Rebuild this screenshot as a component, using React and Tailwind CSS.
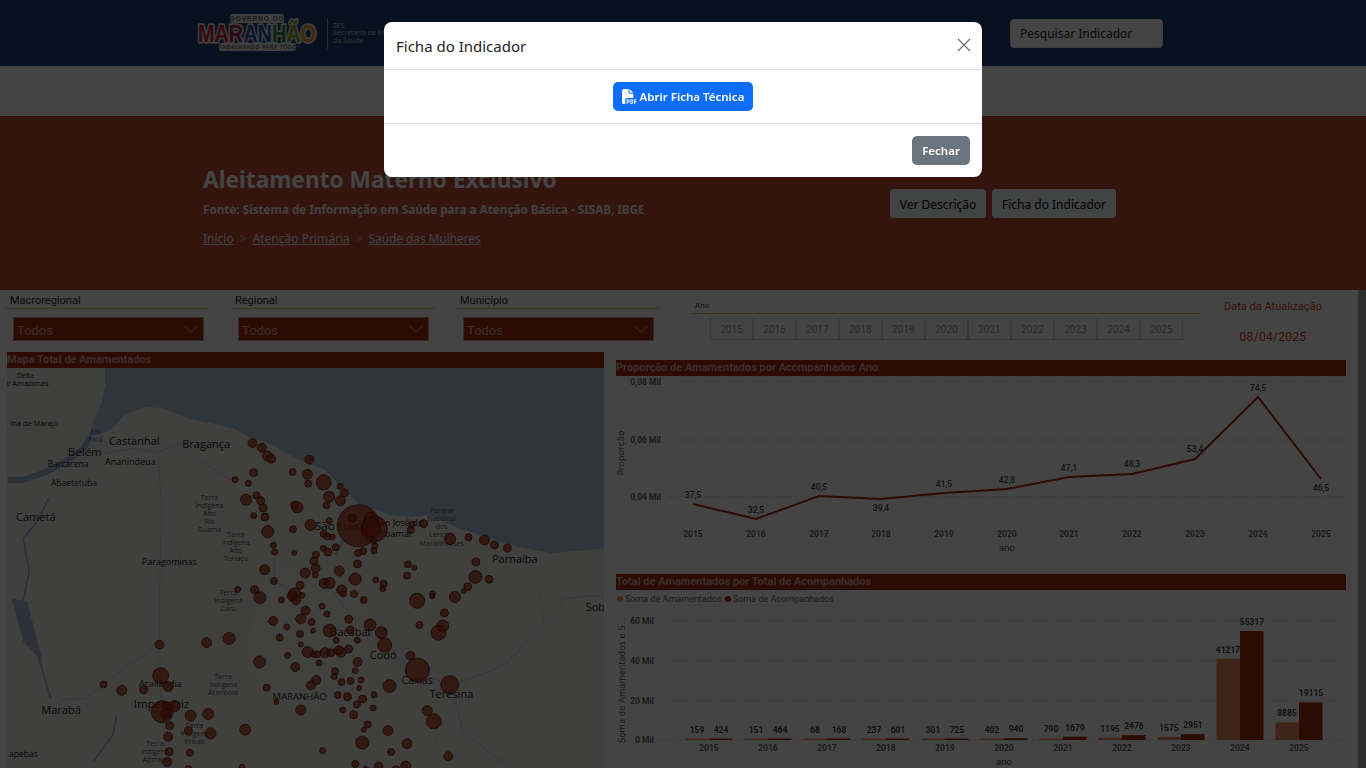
import { ChevronDown } from 'lucide-react'
import { FaFilePdf } from 'react-icons/fa6'

const years = [2015, 2016, 2017, 2018, 2019, 2020, 2021, 2022, 2023, 2024, 2025]

// map data is noted on a 2.57 x 3 grid, px() and py() bring it to map pixels
const px = (x) => x / 2.57 - 7
const py = (y) => y / 3 - 3

const bubbles = [
  [649,234,4.5],[673,248,4.5],[687,273,5],[697,281,4.5],[795,284,4.5],[652,323,4],[604,344,3],[638,355,3],[752,321,3.5],[790,328,5],
  [792,356,3.5],[832,352,7.5],[874,364,3],[885,383,4],[846,395,5.5],[875,407,5],[839,421,3.5],[659,391,3.5],[632,404,5.5],[670,407,4],
  [676,429,4],[652,452,3],[681,456,4],[757,421,4],[764,427,5.5],[688,500,6],[753,493,3.5],[798,480,5.5],[846,467,3],[962,492,13],
  [921,482,21],[905,459,4],[954,462,7],[953,487,9.5],[1059,478,3],[1056,495,3.5],[1089,476,4],[1157,522,5.5],[1204,517,3.5],[1245,525,5],
  [1271,540,4],[1304,549,4],[1223,591,4],[1222,636,6.5],[1257,643,4],[1202,665,4],[1192,678,2.5],[1169,696,5.5],[1112,686,3],[1111,694,2.5],
  [1072,707,7.5],[1142,744,4],[1138,783,6],[1127,803,7.5],[1078,780,3.5],[1048,598,3.5],[1065,608,2.5],[1046,632,3.5],[966,645,3],[986,656,3.5],
  [984,671,3],[913,642,6],[878,675,5],[882,687,3],[910,687,3.5],[935,705,3.5],[832,507,3.5],[841,514,3.5],[854,516,3],[960,527,3],
  [963,543,3],[961,557,3],[933,558,3.5],[920,564,3.5],[919,597,4],[872,618,5],[863,547,3.5],[831,550,3],[843,561,4],[812,569,3.5],
  [807,588,4],[811,610,4.5],[810,630,3],[784,624,5],[833,655,5],[847,654,5.5],[771,661,4],[776,691,3],[757,686,6],[751,693,5],
  [761,706,4.5],[723,705,3],[703,541,3],[706,561,3],[756,564,2.5],[680,614,5],[704,648,3.5],[611,673,3],[654,674,4],[668,698,6],
  [828,724,3],[840,747,3],[785,737,4.5],[773,762,5],[801,771,3.5],[702,768,4.5],[737,786,3],[805,797,2.5],[771,807,3.5],[719,818,3.5],
  [847,797,6.5],[900,795,4],[896,763,4],[951,780,6],[980,803,6],[918,826,3],[864,826,3],[989,840,7],[773,838,2.5],[791,861,5.5],
  [805,868,3],[815,868,3.5],[835,863,5],[850,863,4],[871,856,4.5],[876,862,5],[896,852,4],[739,871,3],[1055,872,4.5],[1073,915,12],
  [919,891,4.5],[820,894,3],[759,906,4.5],[667,891,6],[861,919,3.5],[913,917,3],[859,935,3],[813,945,4.5],[799,961,4.5],[878,951,3.5],
  [901,948,3.5],[928,945,3],[923,969,2.5],[1001,963,6.5],[1156,959,9],[685,968,3.5],[868,990,3.5],[893,995,4],[961,989,3],[932,1002,4],
  [917,1018,3.5],[959,1029,3],[881,1035,3],[909,1049,4],[773,1035,5],[710,1011,2.5],[1098,1037,5],[1115,1069,7.5],[945,1078,3.5],[935,1094,2.5],
  [997,1097,5],[931,1133,6.5],[1046,1136,5],[1005,1161,3.5],[829,1157,3],[1152,1174,4.5],[913,1197,3.5],[973,1205,4.5],[1043,1203,5],[1018,1215,4],
  [940,1213,3],[410,839,4.5],[531,833,5],[589,820,6],[413,932,8],[432,965,5],[266,958,3.5],[313,976,5],[369,974,4],[417,1040,11],
  [430,1025,4.5],[426,1047,5],[449,1023,5.5],[490,1052,5.5],[535,1047,5.5],[436,1082,4],[432,1115,4.5],[484,1097,4],[541,1105,5.5],[630,1094,5.5],
  [435,1160,4],[488,1163,3.5],[430,1191,4.5],[622,1207,3],[484,1212,3.5],
]

const places = [
  ['Delta',65,32,7],['o Amazonas',70,56,7.5],['lha de Marajó',88,175,7.5],['Castanhal',345,228,11],['Belém',218,260,11.5],['Bragança',530,237,11],
  ['Barcarena',175,296,8.5],['Ananindeua',335,291,9],['Abaetetuba',190,354,8.5],['Cametá',92,457,11],['Paragominas',435,592,9],['São Luís',866,484,11.5],
  ['São José de',1025,475,9],['Ribamar',1015,506,9],['Parnaíba',1323,583,11],['Sob',1530,727,11],['Bacabal',900,802,11],['Codó',985,869,11],
  ['Caxias',1072,946,10.5],['Açailândia',412,958,9],['MARANHÃO',770,995,9.5],['Teresina',1160,987,11],['Imperatriz',415,1016,11.5],['Marabá',157,1036,11],
  ['apebas',60,1167,8.5],
]

const areas = [
  [538, 397, ['Terra', 'Indígena', 'Alto', 'Rio', 'Guamá']],
  [606, 509, ['Terra', 'Indígena', 'Alto', 'Turiaçu']],
  [587, 682, ['Terra', 'Indígena', 'Caru']],
  [573, 935, ['Terra', 'Indígena', 'Araribóia']],
  [500, 1082, ['Terra', 'Indígena', 'Krikati']],
  [398, 1135, ['Terra', 'Indígena', 'Apinajé']],
  [1135, 437, ['Parque', 'Nacional', 'dos', 'Lençóis', 'Maranhenses']],
]

const sea = [[270,0],[270,60],[262,110],[240,170],[228,215],[262,205],[290,190],[320,150],[370,125],[420,130],[480,160],[540,175],[600,190],[640,215],[700,240],[760,280],[800,300],[830,310],[880,370],[920,415],[1000,450],[1060,455],[1100,450],[1180,490],[1260,520],[1330,545],[1420,565],[1553,550],[1553,0]]
const rivers = [
  [[230,215],[215,250],[170,290],[120,320],[60,345],[20,345]],
  [[125,400],[95,470],[60,520],[75,620],[50,760],[100,880],[130,1000]],
  [[860,570],[880,530],[905,510]],
  [[300,1050],[290,1110],[240,1190]],
]
const roads = [
  [[270,265],[345,250],[400,262],[470,235],[520,290],[600,350]],
  [[405,262],[415,420],[410,700],[410,840],[415,1000],[430,1200]],
  [[410,840],[330,900],[220,1000],[155,1005]],
  [[705,560],[705,650],[770,690],[850,670],[900,750],[1000,860],[1075,925],[1160,960],[1300,900],[1450,700],[1553,690]],
  [[1160,960],[1190,1100],[1300,1200]],
]
const borders = [[[1380,640],[1400,800],[1290,900],[1200,950],[1130,1100],[1100,1209]]]

const toPath = (pts) => pts.map(([x, y], i) => `${i ? 'L' : 'M'}${px(x).toFixed(1)} ${py(y).toFixed(1)}`).join(' ')

const proportion = [
  [37.5, 693, 504, 495], [32.5, 756, 519, 510], [40.5, 819, 496, 487], [39.4, 881, 499, 508], [41.5, 944, 493, 484], [42.8, 1007, 489, 480],
  [47.1, 1069, 477, 468], [48.3, 1132, 474, 464], [53.4, 1195, 459, 449], [74.5, 1258, 397, 388], [46.5, 1321, 479, 488],
]

const totals = [
  [2015, 159, 424], [2016, 151, 464], [2017, 68, 168], [2018, 237, 601], [2019, 301, 725], [2020, 402, 940],
  [2021, 790, 1679], [2022, 1195, 2476], [2023, 1575, 2951], [2024, 41217, 55317], [2025, 8885, 19115],
]

function Logo() {
  const letters = [['M', '#c9202f'], ['A', '#c9202f'], ['R', '#a8204f'], ['A', '#1f56a8'], ['N', '#1f56a8'], ['H', '#1c8a4a'], ['Ã', '#7fa01f'], ['O', '#e8961c']]
  return (
    <svg width="125" height="38" viewBox="0 0 125 38" className="shrink-0 -ml-px">
      <rect x="34" y="0" width="54" height="9" rx="3" fill="#e8e8e8" />
      <text x="61" y="7" textAnchor="middle" fontSize="6.5" fontFamily="Liberation Sans" letterSpacing="1" fontWeight="700" fill="#666">GOVERNO DO</text>
      <rect x="23" y="29" width="77" height="8" rx="2" fill="#e8e8e8" />
      <text x="61.5" y="35.3" textAnchor="middle" fontSize="5" fontFamily="Liberation Sans" letterSpacing="0.6" fontWeight="700" fill="#666">TRABALHANDO PARA TODOS</text>
      <text x="2" y="28" fontSize="23" fontFamily="Liberation Sans" fontWeight="700" textLength="118" lengthAdjust="spacingAndGlyphs" stroke="#e8e8e8" strokeWidth="3.5" strokeLinejoin="round" paintOrder="stroke">
        {letters.map(([l, c], i) => <tspan key={i} fill={c}>{l}</tspan>)}
      </text>
    </svg>
  )
}

function Filter({ label }) {
  return (
    <div className="w-[203px]">
      <div className="h-[19px] pl-1 text-[11px] leading-[22px] text-[#2a2a2a] border-b border-[#e0c070]">{label}</div>
      <div className="mt-2 ml-[7px] w-[191px] h-[24px] flex items-center justify-between pl-[3px] pr-[3px] bg-[#a5290b] border border-[#c9a090] text-[13px] text-white">
        <span className="pt-[3px] opacity-60">Todos</span>
        <ChevronDown className="w-[26px] h-[26px] shrink-0 -mr-1 text-white opacity-70" strokeWidth={0.8} />
      </div>
    </div>
  )
}

function SectionTitle({ children }) {
  return <div className="h-[16px] bg-[#a5290b] text-[11px] leading-[15px] font-bold text-white/60 whitespace-nowrap">{children}</div>
}

function MapChart() {
  return (
    <svg width="597" height="400" viewBox="0 0 597 400" className="block">
      <rect width="597" height="400" fill="#f0efe9" />
      <ellipse cx="300" cy="270" rx="60" ry="70" fill="#f3f3ef" />
      <ellipse cx="220" cy="225" rx="30" ry="55" fill="#ecefe4" />
      <ellipse cx="520" cy="260" rx="40" ry="60" fill="#ecefe4" />
      <ellipse cx="50" cy="60" rx="50" ry="40" fill="#ecefe4" />
      <path d={toPath(sea) + ' Z'} fill="#b3c4dc" />
      {rivers.map((r, i) => <path key={i} d={toPath(r)} fill="none" stroke="#a9bcd8" strokeWidth={i === 0 ? 6 : 2} />)}
      <path d={toPath([[30,700],[70,710],[90,800],[110,890],[60,830]]) + ' Z'} fill="#a9bcd8" />
      {roads.map((r, i) => <path key={i} d={toPath(r)} fill="none" stroke="#d6cede" strokeWidth="1" />)}
      {borders.map((r, i) => <path key={i} d={toPath(r)} fill="none" stroke="#ccc" strokeWidth="0.8" strokeDasharray="3 2" />)}
      {places.map(([t, x, y, s]) => (
        <text key={t} x={px(x)} y={py(y) + s * 0.35} textAnchor="middle" fontSize={s} fontFamily="Open Sans" fill="#222">{t}</text>
      ))}
      {areas.map(([x, y, lines]) => lines.map((t, i) => (
        <text key={t + y} x={px(x)} y={py(y) + i * 8.1 + 2.5} textAnchor="middle" fontSize="7" fontFamily="Open Sans" fill="#555">{t}</text>
      )))}
      <text x={px(245)} y={py(198) + 2.5} textAnchor="middle" fontSize="7" fontFamily="Open Sans" fill="#3a6db0">Rio</text>
      <text x={px(245)} y={py(223) + 2.5} textAnchor="middle" fontSize="7" fontFamily="Open Sans" fill="#3a6db0">Pará</text>
      {bubbles.map(([x, y, r], i) => (
        <circle key={i} cx={px(x)} cy={py(y)} r={r} fill="#a5290b" fillOpacity="0.72" stroke="#6a1503" strokeWidth="0.8" />
      ))}
    </svg>
  )
}

function LineChart() {
  const points = proportion.map(([, x, y]) => `${x - 616},${y - 376}`).join(' ')
  return (
    <svg width="730" height="190" viewBox="0 0 730 190" className="block" fontFamily="Roboto">
      {[['0,08 Mil', 6], ['0,06 Mil', 64], ['0,04 Mil', 121]].map(([t, y]) => (
        <g key={t}>
          <line x1="52" x2="730" y1={y} y2={y} stroke="#bbb" strokeWidth="1" strokeDasharray="1 2" />
          <text x="45" y={y + 3} textAnchor="end" fontSize="8.5" fontWeight="700" fill="#666">{t}</text>
        </g>
      ))}
      <text transform="translate(8 77) rotate(-90)" textAnchor="middle" fontSize="9" fontFamily="DejaVu Sans" fill="#666">Proporção</text>
      <polyline points={points} fill="none" stroke="#a5290b" strokeWidth="2" />
      {proportion.map(([v, x, , ly], i) => (
        <g key={v}>
          <text x={x - 616} y={ly - 373} textAnchor="middle" fontSize="8.5" fontWeight="500" fill="#444">{v.toFixed(1).replace('.', ',')}</text>
          <text x={x - 616} y="161" textAnchor="middle" fontSize="8.5" fontWeight="700" fill="#666">{years[i]}</text>
        </g>
      ))}
      <text x="391" y="175" textAnchor="middle" fontSize="9.5" fill="#444">ano</text>
    </svg>
  )
}

function BarChart() {
  const base = 150
  const scale = 109 / 55317
  return (
    <svg width="730" height="178" viewBox="0 0 730 178" className="block" fontFamily="Roboto">
      <circle cx="4" cy="9" r="3" fill="#e98a63" />
      <text x="9" y="12" fontSize="9" fill="#666">Soma de Amamentados</text>
      <circle cx="112" cy="9" r="3" fill="#a5290b" />
      <text x="117" y="12" fontSize="9" fill="#666">Soma de Acompanhados</text>
      {[['60 Mil', 31], ['40 Mil', 71], ['20 Mil', 111], ['0 Mil', 150]].map(([t, y]) => (
        <g key={t}>
          <line x1="44" x2="730" y1={y} y2={y} stroke="#bbb" strokeWidth="1" strokeDasharray="1 2" />
          <text x="38" y={y + 3} textAnchor="end" fontSize="8.5" fontWeight="700" fill="#666">{t}</text>
        </g>
      ))}
      <text transform="translate(9 90) rotate(-90)" textAnchor="middle" fontSize="8.5" fontFamily="DejaVu Sans" fill="#666">Soma de Amamentados e S...</text>
      {totals.map(([year, a, b], i) => {
        const cx = 93 + i * 59
        const ha = Math.max(a * scale, 1.5)
        const hb = Math.max(b * scale, 1.5)
        return (
          <g key={year}>
            <rect x={cx - 23.5} y={base - ha} width="23.5" height={ha} fill="#e98a63" />
            <rect x={cx} y={base - hb} width="23.5" height={hb} fill="#a5290b" />
            <text x={cx - 12} y={base - ha - 6} textAnchor="middle" fontSize="8.5" fontWeight="700" fill="#444">{a}</text>
            <text x={cx + 12} y={base - hb - 6} textAnchor="middle" fontSize="8.5" fontWeight="700" fill="#444">{b}</text>
            <text x={cx} y="161" textAnchor="middle" fontSize="8.5" fontWeight="700" fill="#666">{year}</text>
          </g>
        )
      })}
      <text x="388" y="175" textAnchor="middle" fontSize="9.5" fill="#444">ano</text>
    </svg>
  )
}

function Dashboard() {
  return (
    <div className="relative h-[478px] overflow-hidden bg-white font-['Roboto',sans-serif]">
      <div className="absolute right-0 top-0 bottom-0 w-2 bg-[#aaa]" />
      <div className="h-[62px] flex items-start">
        <div className="ml-[6px] flex gap-[22px]">
          <Filter label="Macroregional" />
          <Filter label="Regional" />
          <Filter label="Município" />
        </div>
        <div className="ml-[33px] w-[508px]">
          <div className="h-[24px] pt-[11px] pl-[3px] text-[8px] leading-[10px] text-[#333] border-b border-[#e0c070]">Ano</div>
          <div className="mt-[4px] ml-[18px] flex">
            {years.map((y) => (
              <div key={y} className="w-[43px] h-[22px] pt-px flex items-center justify-center border border-[#d8d8d8] text-[10px] text-[#999]">{y}</div>
            ))}
          </div>
        </div>
        <div className="w-[146px] text-center text-[#c8402a]">
          <div className="mt-[10px] text-[11px] leading-[14px]">Data da Atualização</div>
          <div className="mt-[16px] text-[12px] leading-[14px] tracking-[0.3px]">08/04/2025</div>
        </div>
      </div>
      <div className="flex items-start">
        <div className="ml-[7px] w-[597px]">
          <SectionTitle>Mapa Total de Amamentados</SectionTitle>
          <MapChart />
        </div>
        <div className="ml-[12px] w-[730px] pt-[8px]">
          <SectionTitle>Proporção de Amamentados por Acompanhados Ano</SectionTitle>
          <div className="h-[198px]">
            <LineChart />
          </div>
          <SectionTitle>Total de Amamentados por Total de Acompanhados</SectionTitle>
          <BarChart />
        </div>
      </div>
    </div>
  )
}

export default function App() {
  return (
    <div className="relative h-screen overflow-hidden bg-white font-['Noto_Sans',sans-serif]">
      <header className="h-[66px] bg-[#1a3c74] flex items-center pl-[197px] pr-[203px]">
        <Logo />
        <div className="ml-[6px] h-[31px] border-l border-white/50" />
        <div className="ml-[5px] w-[60px] text-[7px] leading-[7.5px] text-white/70 whitespace-nowrap">
          <p>SES</p>
          <p>Secretaria de Estado</p>
          <p>da Saúde</p>
        </div>
        <input
          readOnly
          placeholder="Pesquisar Indicador"
          className="ml-auto w-[153px] h-[29px] px-[9px] pt-px rounded bg-white border border-gray-200 text-[12px] placeholder:text-[#222]"
        />
      </header>
      <nav className="h-[50px] bg-white" />
      <section className="h-[174px] bg-[#bf4f34] flex items-start pl-[203px]">
        <div className="w-[687px]">
          <h1 className="mt-[50px] text-[22.7px] leading-[28px] font-bold text-white">Aleitamento Materno Exclusivo</h1>
          <p className="mt-[7px] text-[11.7px] leading-[16px] font-bold text-white/90">Fonte: Sistema de Informação em Saúde para a Atenção Básica - SISAB, IBGE</p>
          <div className="mt-[14px] flex gap-[6px] text-[12px] leading-[15px] text-white/90">
            <a className="underline">Início</a>
            <span className="opacity-50">&gt;</span>
            <a className="underline">Atenção Primária</a>
            <span className="opacity-50">&gt;</span>
            <a className="underline tracking-[-0.1px]">Saúde das Mulheres</a>
          </div>
        </div>
        <div className="mt-[73px] flex gap-[6px]">
          <button className="w-[96px] h-[29px] pt-[2px] rounded bg-[#f8f9fa] text-[12px] text-black">Ver Descrição</button>
          <button className="w-[124px] h-[29px] pt-[2px] rounded bg-[#f8f9fa] text-[12px] text-black">Ficha do Indicador</button>
        </div>
      </section>
      <Dashboard />

      <div className="fixed inset-0 bg-black/[0.733]" />
      <div className="fixed left-[384px] top-[22px] w-[598px] h-[155px] rounded-lg bg-white flex flex-col">
        <div className="h-[48px] flex items-center justify-between pl-3 pr-[11px] border-b border-[#dee2e6]">
          <h5 className="pt-[2px] text-[15px] text-[#212529]">Ficha do Indicador</h5>
          <svg width="14" height="14" viewBox="0 0 14 14" className="-mt-[2px] text-[#777]">
            <path d="M1 1 13 13 M13 1 1 13" stroke="currentColor" strokeWidth="1.4" />
          </svg>
        </div>
        <div className="h-[54px] flex items-center justify-center border-b border-[#dee2e6]">
          <button className="w-[140px] h-[29px] rounded-[5px] bg-[#0d6efd] flex items-center justify-center gap-[3px] text-[11.5px] font-semibold text-white">
            <FaFilePdf className="w-[15px] h-[15px] shrink-0" /> Abrir Ficha Técnica
          </button>
        </div>
        <div className="flex-1 flex items-center justify-end pr-3">
          <button className="w-[58px] h-[29px] pt-px rounded-[5px] bg-[#6c757d] text-[11.5px] font-semibold text-white">Fechar</button>
        </div>
      </div>
    </div>
  )
}
